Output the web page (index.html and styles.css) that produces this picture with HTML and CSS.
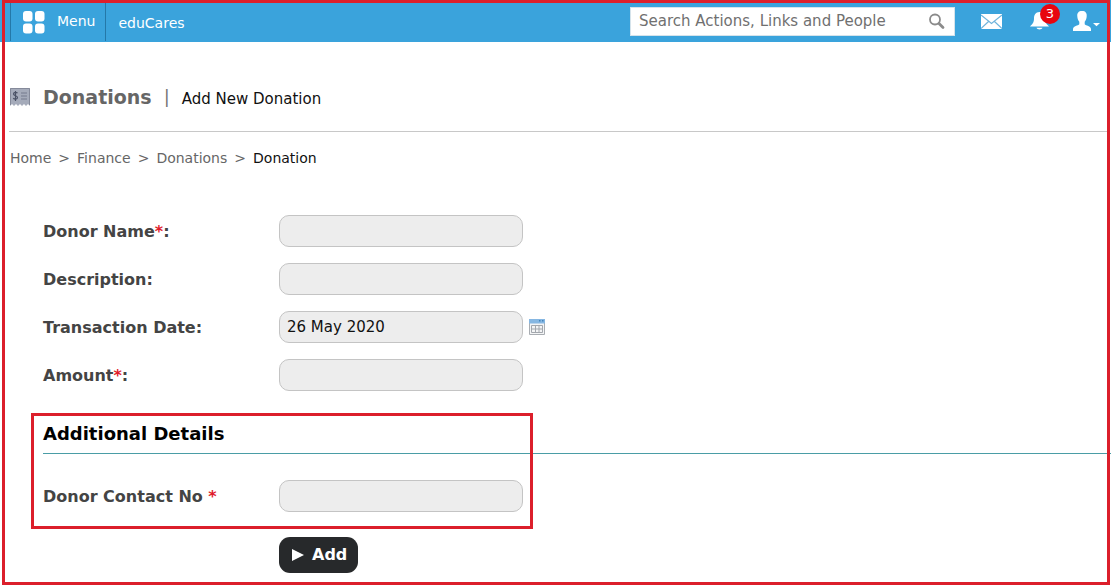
FILE: index.html
```html
<!DOCTYPE html>
<html lang="en">
<head>
<meta charset="utf-8">
<title>Donations</title>
<link rel="stylesheet" href="styles.css">
</head>
<body>
<div class="page">
  <header class="topbar">
    <button class="menu" type="button">
      <svg width="22" height="23" viewBox="0 0 22 23" fill="#fff"><rect width="9.5" height="10.500" rx="3"/><rect x="12" width="9.500" height="10.500" rx="3"/><rect y="12.500" width="9.500" height="10" rx="3"/><rect x="12" y="12.500" width="9.500" height="10" rx="3"/></svg>
      <span>Menu</span>
    </button>
    <a class="brand" href="#">eduCares</a>
    <form class="search">
      <input type="search" aria-label="Search" placeholder="Search Actions, Links and People">
      <button type="button" aria-label="Search">
        <svg width="18" height="18" viewBox="0 0 18 18" fill="none" stroke="#8b8b8b"><circle cx="7" cy="7.500" r="5" stroke-width="1.800"/><path d="M11 11.500l4 4" stroke-width="2.800" stroke-linecap="round"/></svg>
      </button>
    </form>
    <nav class="tools" aria-label="Account">
      <a href="#" aria-label="Messages"><svg width="21" height="15" viewBox="0 0 21 15"><path fill="#fff" d="M0 0h21v15H0z"/><path d="M0 1l10.500 8.500L21 1M0 14.500l7.500-7M21 14.500l-7.500-7" fill="none" stroke="#6fb4dc" stroke-width="1.200"/></svg></a>
      <a class="alerts" href="#" aria-label="Notifications"><svg width="19" height="18" viewBox="0 0 19 18" fill="#fff"><path d="M9.500 0C5.500 0 4 3 4 6.500 4 10.500 2.500 12 0 14.500h19c-2.500-2.500-4-4-4-8C15 3 13.500 0 9.500 0zM6.500 15.800h6c-.8 2.200-5.200 2.200-6 0z"/></svg><span class="badge">3</span></a>
      <a href="#" aria-label="Profile"><svg width="28" height="20" viewBox="0 0 28 20" fill="#fff"><path d="M9 0c3.500 0 5 2 4.700 5.200-.1 2.600-1 4.200-2 5.500v2.500c1 1.500 6.300 1.500 6.300 5V20H0v-1.800c0-3.500 5.300-3.500 6.300-5v-2.500c-1-1.300-1.900-2.900-2-5.500C4 2 5.500 0 9 0zM20 12h7l-3.500 3.200z"/></svg></a>
    </nav>
  </header>

  <main>
    <div class="title">
      <svg width="20" height="18" viewBox="0 0 20 18"><path fill="#a5abba" d="M0 0h20v18l-2-2-2 2-2-2-2 2-2-2-2 2-2-2-2 2-2-2-2 2z"/><path d="M.5 17V.5h19V17" fill="none" stroke="#858a9a"/><path d="M11 5h6M11 8h6M11 11h6" stroke="#747b8d"/><path d="M7.500 5.200C6.500 4 3.500 4 3.500 6s4 1.400 4 3.500-3 2-4.300.8M5.500 3v10" fill="none" stroke="#4c5367" stroke-width="1.200"/></svg>
      <h1>Donations</h1>
      <span class="bar">|</span>
      <span class="sub">Add New Donation</span>
    </div>
    <nav class="crumbs" aria-label="Breadcrumb">
      <a href="#">Home</a><span>&gt;</span><a href="#">Finance</a><span>&gt;</span><a href="#">Donations</a><span>&gt;</span><span class="current">Donation</span>
    </nav>

    <form class="form">
      <div class="row"><label for="name">Donor Name<em>*</em>:</label><input id="name" type="text"></div>
      <div class="row"><label for="desc">Description:</label><input id="desc" type="text"></div>
      <div class="row"><label for="date">Transaction Date:</label><input id="date" type="text" value="26 May 2020">
        <button class="pick" type="button" aria-label="Choose date"><svg width="16" height="16" viewBox="0 0 16 16"><path fill="#f3f4f5" stroke="#a9adb2" d="M.5.500h15v15H.5z"/><path fill="#86b7e2" d="M0 0h16v4.500H0z"/><path fill="#4384bd" d="M10 1h1.500v1.500H10zM13 1h1.500v1.500H13z"/><path fill="none" stroke="#a3a7ad" d="M2.500 6.500h11v7h-11zM2.500 10h11M6.500 6.500v7M10 6.500v7"/></svg></button></div>
      <div class="row"><label for="amount">Amount<em>*</em>:</label><input id="amount" type="text"></div>

      <section class="extra">
        <h2>Additional Details</h2>
        <div class="row"><label for="contact">Donor Contact No <em>*</em></label><input id="contact" type="text"></div>
        <div class="highlight"></div>
      </section>

      <button class="add" type="submit"><svg width="12" height="12" viewBox="0 0 12 12"><path fill="#fff" d="M0 0l12 6-12 6z"/></svg>Add</button>
    </form>
  </main>
  <div class="frame"></div>
</div>
</body>
</html>
```
FILE: styles.css
```css
* { box-sizing: border-box; }
body {
  margin: 0;
  background: #fff;
  color: #111;
  font: 14px/20px "DejaVu Sans", Verdana, sans-serif;
}
button, input { font: inherit; }
button { border: 0; padding: 0; background: none; cursor: pointer; }
a { color: inherit; text-decoration: none; }
svg { display: block; flex: none; }
h1, h2 { margin: 0; }

.page { position: relative; min-height: 100vh; }
.frame {
  position: absolute;
  inset: 0 1px 1px 2px;
  border: 3px solid #dc1f2b;
  pointer-events: none;
}

.topbar {
  display: flex;
  align-items: center;
  height: 42px;
  padding: 0 10px;
  background: #3aa3dc;
  color: #fff;
}
.menu {
  display: flex;
  align-items: center;
  gap: 12px;
  height: 40px;
  padding: 2px 10px 0 12px;
  border: solid #2478a8;
  border-width: 0 1px;
  color: #fff;
}
.menu span { padding-bottom: 3px; }
.brand { padding: 3px 0 0 12px; }
.search {
  display: flex;
  align-items: center;
  width: 325px;
  height: 29px;
  margin-left: auto;
  padding: 0 8px;
  background: #fff;
  border: 1px solid #d5e3eb;
}
.search input {
  flex: 1;
  min-width: 0;
  padding: 0;
  border: 0;
  outline: 0;
  color: #666;
  font-size: 15px;
}
.search input::placeholder { color: #707070; }
.tools { display: flex; align-items: center; gap: 28px; margin-left: 26px; }
.alerts { position: relative; }
.badge {
  position: absolute;
  left: 10px;
  top: -8px;
  width: 20px;
  height: 20px;
  border-radius: 50%;
  background: #e8060f;
  font-size: 13px;
  text-align: center;
}
.tools a:last-child { margin-left: -4px; }

.title {
  display: flex;
  align-items: center;
  margin: 0 4px 0 9px;
  padding: 42px 0 21px 1px;
  border-bottom: 1px solid #c8c8c8;
}
.title h1 { margin-left: 13px; font-size: 19px; line-height: 26px; color: #666; }
.bar { margin: 0 12px; font-size: 18px; color: #777; }
.sub { padding-top: 3px; font-size: 15px; }

.crumbs { display: flex; gap: 7px; padding: 16px 10px 0; color: #666; }
.current { color: #111; }

.form { padding: 47px 0 0 43px; }
.row { display: flex; align-items: center; margin-bottom: 16px; }
.row label {
  width: 236px;
  padding-top: 1px;
  color: #444;
  font-weight: bold;
  font-size: 16px;
}
.row em { color: #e01b2b; font-style: normal; }
.row input {
  width: 244px;
  height: 32px;
  padding: 0 7px;
  border: 1px solid #c4c4c4;
  border-radius: 10px;
  background: #ededed;
  color: #111;
  font-size: 15px;
}
.pick { margin-left: 6px; }

.extra { position: relative; padding-top: 15px; }
.extra h2 {
  padding-bottom: 7px;
  border-bottom: 1px solid #4a9da6;
  margin-bottom: 26px;
  font-size: 18px;
  line-height: 24px;
  color: #000;
}
.highlight {
  position: absolute;
  left: -12px;
  top: 6px;
  bottom: -17px;
  width: 502px;
  border: 3px solid #dc1f2b;
  pointer-events: none;
}
.add {
  display: flex;
  align-items: center;
  gap: 8px;
  height: 36px;
  margin: 25px 0 13px 236px;
  padding: 0 11px 0 13px;
  border-radius: 11px;
  background: #27292b;
  color: #fff;
  font-weight: bold;
  font-size: 16px;
}
```
